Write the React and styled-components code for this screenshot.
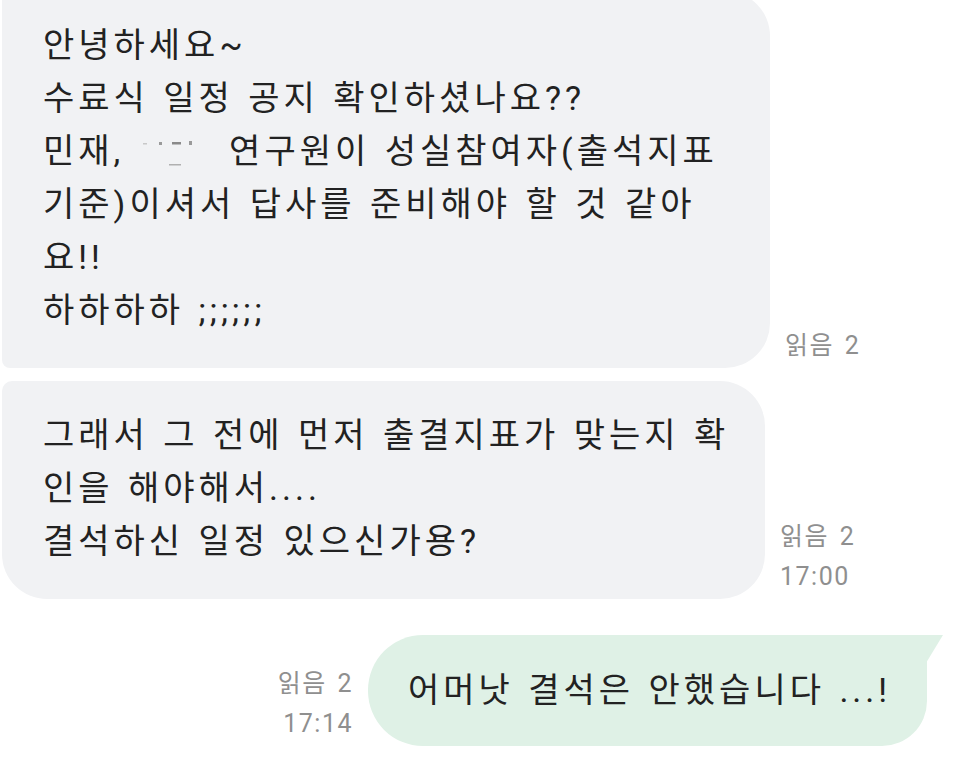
import styled, { createGlobalStyle } from 'styled-components'

const GlobalStyle = createGlobalStyle`
  html, body {
    margin: 0;
    padding: 0;
    background: #ffffff;
    overflow: hidden;
  }
  body {
    font-family: Roboto, "Noto Sans CJK KR", sans-serif;
    color: #222222;
  }
`

const Chat = styled.div`
  width: 965px;
  height: 760px;
  display: flex;
  flex-direction: column;
  row-gap: 13px;
  overflow: hidden;
`

const Row = styled.div`
  display: flex;
  align-items: flex-end;
  column-gap: 15px;
  justify-content: ${p => (p.$mine ? 'flex-end' : 'flex-start')};
  padding: ${p => (p.$mine ? '0 38px 0 0' : '0 0 0 2px')};
  margin-top: ${p => p.$offset || 0}px;
`

const Bubble = styled.div`
  position: relative;
  box-sizing: border-box;
  width: ${p => p.$width}px;
  padding: ${p => p.$pad || '28px 20px 31px 41px'};
  background: ${p => (p.$mine ? '#dff1e6' : '#f1f2f4')};
  border-radius: ${p => p.$radius};
  font-size: 34px;
  line-height: 53px;
  white-space: nowrap;
  letter-spacing: 4px;
  word-spacing: 2px;

  ${p =>
    p.$mine &&
    `
    &::after {
      content: '';
      position: absolute;
      top: 0;
      right: -16px;
      width: 17px;
      height: 28px;
      background: #dff1e6;
      clip-path: polygon(0 0, 100% 0, 0 100%);
    }
  `}
`

const Line = styled.div``

const Redacted = styled.span`
  display: inline-block;
  width: 76px;
  height: 40px;
  vertical-align: -8px;
`

const Meta = styled.div`
  display: flex;
  flex-direction: column;
  align-items: ${p => (p.$mine ? 'flex-end' : 'flex-start')};
  font-size: 25px;
  line-height: 40px;
  letter-spacing: 1.5px;
  word-spacing: 3px;
  color: #8f8f8f;
  padding-bottom: 2px;
`

function Smudge() {
  return (
    <Redacted>
      <svg width="76" height="40" viewBox="0 0 76 40">
        <rect x="4" y="12" width="4" height="1.5" fill="#c8c8c8" />
        <rect x="20" y="11" width="3" height="3" fill="#9a9a9a" />
        <rect x="33" y="11" width="9" height="2.5" fill="#8a8a8a" />
        <rect x="50" y="10" width="3" height="4" fill="#9a9a9a" />
        <rect x="30" y="33" width="12" height="1.5" fill="#b0b0b0" />
      </svg>
    </Redacted>
  )
}

const messages = [
  {
    mine: false,
    width: 768,
    radius: '10px 45px 45px 8px',
    offset: -9,
    lines: [
      '안녕하세요~',
      '수료식 일정 공지 확인하셨나요??',
      null,
      '기준)이셔서 답사를 준비해야 할 것 같아',
      '요!!',
      '하하하하 ;;;;;;',
    ],
    meta: ['읽음 2'],
  },
  {
    mine: false,
    width: 763,
    radius: '10px 45px 45px 45px',
    lines: ['그래서 그 전에 먼저 출결지표가 맞는지 확', '인을 해야해서....', '결석하신 일정 있으신가용?'],
    meta: ['읽음 2', '17:00'],
  },
  {
    mine: true,
    width: 559,
    radius: '55px 0 45px 55px',
    offset: 23,
    pad: '29px 20px 29px 40px',
    lines: ['어머낫 결석은 안했습니다 ...!'],
    meta: ['읽음 2', '17:14'],
  },
]

export default function App() {
  return (
    <>
      <GlobalStyle />
      <Chat>
        {messages.map((m, i) => {
          const meta = (
            <Meta $mine={m.mine}>
              {m.meta.map(t => (
                <span key={t}>{t}</span>
              ))}
            </Meta>
          )
          return (
            <Row key={i} $mine={m.mine} $offset={m.offset}>
              {m.mine && meta}
              <Bubble $mine={m.mine} $width={m.width} $radius={m.radius} $pad={m.pad}>
                {m.lines.map((l, j) =>
                  l === null ? (
                    <Line key={j}>
                      민재, <Smudge /> 연구원이 성실참여자(출석지표
                    </Line>
                  ) : (
                    <Line key={j}>{l}</Line>
                  )
                )}
              </Bubble>
              {!m.mine && meta}
            </Row>
          )
        })}
      </Chat>
    </>
  )
}
